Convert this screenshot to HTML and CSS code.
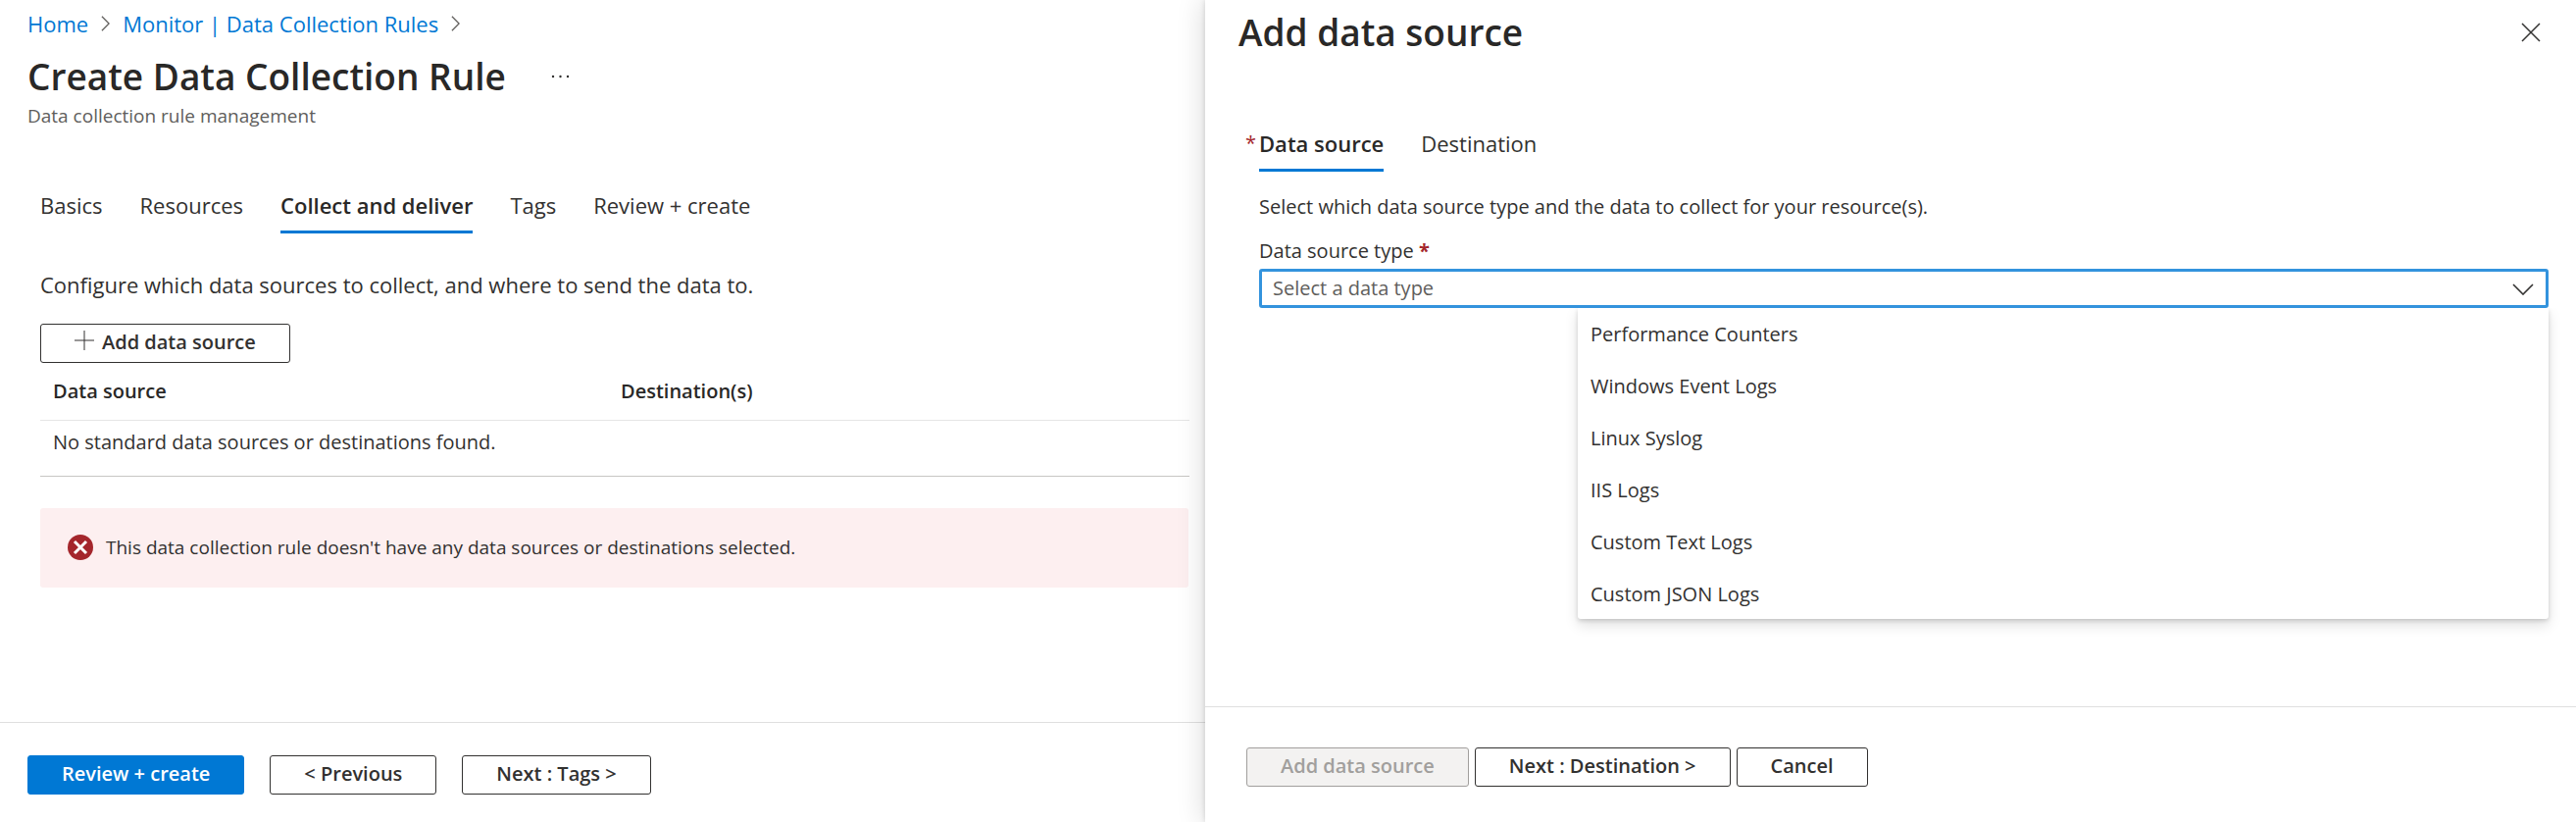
FILE: index.html
```
<!DOCTYPE html>
<html lang="en">
<head>
<meta charset="utf-8">
<title>Create Data Collection Rule</title>
<link rel="stylesheet" href="styles.css">
</head>
<body>
<div class="shell">
  <main class="page">
    <header class="page-head">
      <nav class="breadcrumb" aria-label="Breadcrumb">
        <a href="#">Home</a>
        <svg class="crumb-arrow" viewBox="0 0 10 18" aria-hidden="true"><path d="M1 1l8 8-8 8"/></svg>
        <a href="#">Monitor | Data Collection Rules</a>
        <svg class="crumb-arrow" viewBox="0 0 10 18" aria-hidden="true"><path d="M1 1l8 8-8 8"/></svg>
      </nav>
      <div class="title-row">
        <h1 class="title">Create Data Collection Rule</h1>
        <button class="icon-button more" type="button" aria-label="More">
          <svg viewBox="0 0 20 4" aria-hidden="true"><circle cx="2" cy="2" r="1.2"/><circle cx="9.5" cy="2" r="1.2"/><circle cx="17" cy="2" r="1.2"/></svg>
        </button>
      </div>
      <p class="subtitle">Data collection rule management</p>
    </header>
    <section class="page-body">
      <nav class="tabs" aria-label="Steps">
        <a class="tab" href="#">Basics</a>
        <a class="tab" href="#">Resources</a>
        <a class="tab active" href="#">Collect and deliver</a>
        <a class="tab" href="#">Tags</a>
        <a class="tab" href="#">Review + create</a>
      </nav>
      <p class="intro">Configure which data sources to collect, and where to send the data to.</p>
      <button class="button add" type="button">
        <svg class="plus" viewBox="0 0 20 20" aria-hidden="true"><path d="M10 0v20M0 10h20"/></svg>
        Add data source
      </button>
      <table class="grid">
        <thead>
          <tr><th scope="col">Data source</th><th scope="col">Destination(s)</th></tr>
        </thead>
        <tbody>
          <tr><td colspan="2">No standard data sources or destinations found.</td></tr>
        </tbody>
      </table>
      <div class="alert" role="alert">
        <svg class="alert-icon" viewBox="0 0 26 26" aria-hidden="true"><circle cx="13" cy="13" r="13"/><path d="M7 7l12 12M19 7L7 19"/></svg>
        <span>This data collection rule doesn't have any data sources or destinations selected.</span>
      </div>
    </section>
    <footer class="page-foot">
      <button class="button primary" type="button">Review + create</button>
      <button class="button" type="button">&lt; Previous</button>
      <button class="button" type="button">Next : Tags &gt;</button>
    </footer>
  </main>
  <aside class="panel" aria-labelledby="panel-title">
    <header class="panel-head">
      <h2 class="title" id="panel-title">Add data source</h2>
      <button class="icon-button close" type="button" aria-label="Close">
        <svg viewBox="0 0 20 20" aria-hidden="true"><path d="M1 1l18 18M19 1L1 19"/></svg>
      </button>
    </header>
    <section class="panel-body">
      <nav class="tabs panel-tabs" aria-label="Panel steps">
        <a class="tab active" href="#"><span class="tab-star">*</span>Data source</a>
        <a class="tab" href="#">Destination</a>
      </nav>
      <p class="help">Select which data source type and the data to collect for your resource(s).</p>
      <label class="label" for="source-type">Data source type <span class="star">*</span></label>
      <div class="combo">
        <select class="select" id="source-type">
          <option>Select a data type</option>
        </select>
        <svg class="chevron" viewBox="0 0 22 12" aria-hidden="true"><path d="M1 1l10 10L21 1"/></svg>
        <ul class="menu" role="listbox" aria-label="Data source type">
          <li role="option">Performance Counters</li>
          <li role="option">Windows Event Logs</li>
          <li role="option">Linux Syslog</li>
          <li role="option">IIS Logs</li>
          <li role="option">Custom Text Logs</li>
          <li role="option">Custom JSON Logs</li>
        </ul>
      </div>
    </section>
    <footer class="panel-foot">
      <button class="button" type="button" disabled>Add data source</button>
      <button class="button" type="button">Next : Destination &gt;</button>
      <button class="button" type="button">Cancel</button>
    </footer>
  </aside>
</div>
</body>
</html>
```
FILE: styles.css
```
* {
  box-sizing: border-box;
}

body {
  margin: 0;
  background: #fff;
  color: #323130;
  font-family: "Open Sans", "Noto Sans", sans-serif;
  font-size: 20px;
  line-height: 28px;
}

h1, h2, p, ul {
  margin: 0;
  padding: 0;
}

a {
  color: inherit;
  text-decoration: none;
}

button, select {
  font: inherit;
  color: inherit;
}

svg {
  display: block;
  fill: none;
  stroke: currentColor;
}

.shell {
  display: grid;
  grid-template-columns: 1229fr 1398fr;
  min-height: 100vh;
  overflow: hidden;
}

.page, .panel {
  display: flex;
  flex-direction: column;
  min-width: 0;
}

.page-head {
  padding: 10px 28px 0;
}

.breadcrumb {
  display: flex;
  align-items: center;
  gap: 13px;
  color: #0078d4;
  font-size: 22px;
}

.crumb-arrow {
  width: 9px;
  height: 18px;
  color: #605e5c;
  stroke-width: 1.4;
}

.title-row {
  display: flex;
  align-items: center;
  gap: 42px;
  margin-top: 14px;
}

.title {
  color: #292827;
  font-size: 37px;
  font-weight: 600;
  line-height: 52px;
}

.icon-button {
  padding: 4px;
  border: 0;
  background: none;
}

.more svg {
  width: 20px;
  height: 4px;
  fill: #323130;
  stroke: none;
}

.subtitle {
  margin-top: 2px;
  color: #605e5c;
  font-size: 19px;
  line-height: 24px;
}

.page-body {
  flex: 1;
  padding: 65px 16px 0 41px;
}

.tabs {
  display: flex;
  gap: 38px;
  font-size: 22px;
}

.tab {
  padding-bottom: 12px;
  border-bottom: 3px solid transparent;
}

.tab.active {
  border-color: #0078d4;
  color: #292827;
  font-weight: 600;
}

.intro {
  margin-top: 38px;
  font-size: 22px;
}

.button {
  display: inline-flex;
  align-items: center;
  justify-content: center;
  height: 40px;
  padding: 0 34px 2px;
  border: 1px solid #323130;
  border-radius: 3px;
  background: #fff;
  font-weight: 600;
  line-height: 28px;
  white-space: nowrap;
}

.button:disabled {
  border-color: #a19f9d;
  background: #f3f2f1;
  color: #a19f9d;
}

.button.primary {
  border-color: #0078d4;
  background: #0078d4;
  color: #fff;
}

.add {
  gap: 8px;
  margin-top: 26px;
}

.plus {
  width: 20px;
  height: 20px;
  margin-bottom: 4px;
}

.grid {
  width: 100%;
  margin-top: 14px;
  border-collapse: collapse;
  table-layout: fixed;
}

.grid th, .grid td {
  padding: 0 13px;
  text-align: left;
}

.grid th {
  height: 44px;
  padding-bottom: 14px;
  border-bottom: 1px solid #e6e6e6;
  color: #292827;
  font-weight: 600;
}

.grid th:first-child {
  width: 579px;
}

.grid td {
  padding-top: 8px;
  padding-bottom: 20px;
  border-bottom: 1px solid #c8c6c4;
}

.alert {
  display: flex;
  align-items: center;
  gap: 13px;
  min-height: 81px;
  margin: 32px 1px 0 0;
  padding: 0 28px;
  border-radius: 3px;
  background: #fdeff0;
  font-size: 19px;
}

.alert-icon {
  flex: none;
  width: 26px;
  height: 26px;
}

.alert-icon circle {
  fill: #a4262c;
  stroke: none;
}

.alert-icon path {
  stroke: #fff;
  stroke-width: 3;
}

.page-foot {
  display: flex;
  gap: 26px;
  padding: 33px 28px 28px;
  border-top: 1px solid #dfdfdf;
}

.panel {
  position: relative;
  background: #fff;
  box-shadow: 0 0 6px rgba(0, 0, 0, 0.14), 0 0 28px rgba(0, 0, 0, 0.16);
}

.panel-head {
  display: flex;
  align-items: center;
  justify-content: space-between;
  padding: 7px 32px 0 34px;
}

.close svg {
  width: 20px;
  height: 20px;
  stroke-width: 1.5;
}

.panel-body {
  flex: 1;
  padding: 73px 28px 0 55px;
}

.panel-tabs .tab {
  position: relative;
}

.tab-star {
  position: absolute;
  right: 100%;
  margin-right: 3px;
  color: #a4262c;
  font-size: 20px;
  font-weight: 400;
}

.help {
  margin-top: 22px;
}

.label {
  display: block;
  margin-top: 17px;
}

.star {
  color: #a4262c;
  font-weight: 700;
}

.combo {
  position: relative;
  margin-top: 4px;
}

.select {
  display: block;
  width: 100%;
  height: 40px;
  padding: 0 48px 0 11px;
  border: 3px solid #3393dd;
  border-radius: 3px;
  outline: 0;
  background: #fff;
  color: #605e5c;
  appearance: none;
}

.chevron {
  position: absolute;
  top: 15px;
  right: 15px;
  width: 22px;
  height: 12px;
  stroke-width: 1.6;
  pointer-events: none;
}

.menu {
  position: absolute;
  top: 100%;
  right: 0;
  left: 325px;
  border-radius: 0 0 3px 3px;
  background: #fff;
  box-shadow: 0 2px 4px rgba(0, 0, 0, 0.14), 0 6px 14px rgba(0, 0, 0, 0.13);
  clip-path: inset(0 -30px -30px -30px);
  list-style: none;
}

.menu li {
  padding: 13px 13px 12px;
}

.menu li:last-child {
  padding-bottom: 11px;
}

.panel-foot {
  display: flex;
  gap: 6px;
  padding: 41px 42px 36px;
  border-top: 1px solid #dfdfdf;
}
```
